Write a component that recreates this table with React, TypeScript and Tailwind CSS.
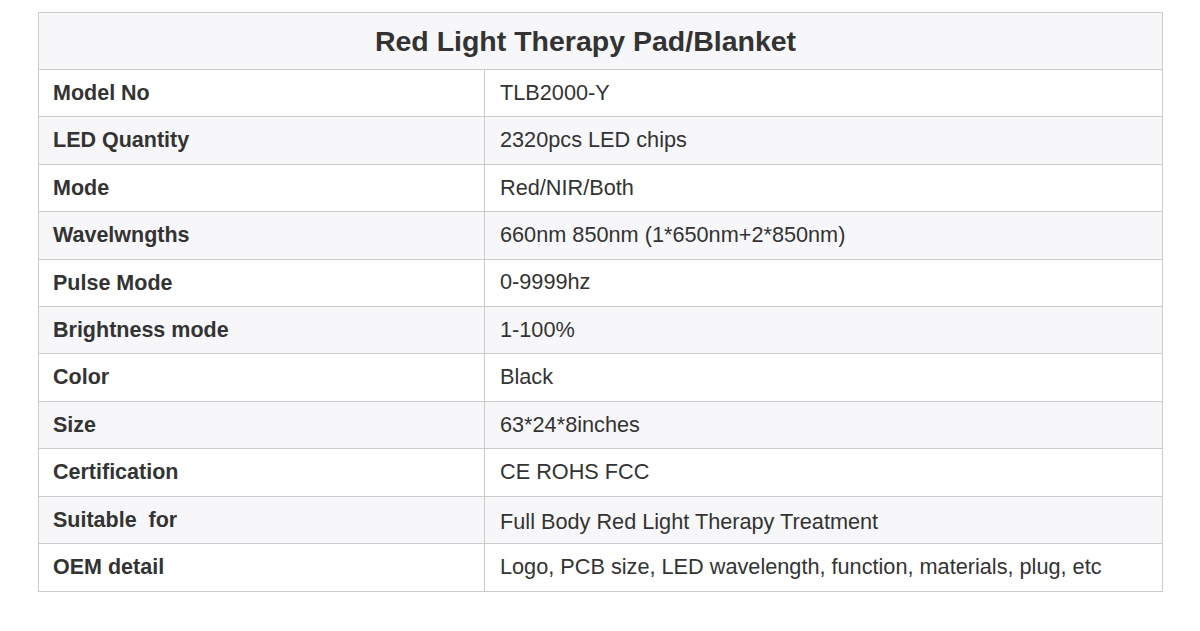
import React from "react";

const rows: [string, string, boolean][] = [
  ["Model No", "TLB2000-Y", false],
  ["LED Quantity", "2320pcs LED chips", false],
  ["Mode", "Red/NIR/Both", false],
  ["Wavelwngths", "660nm 850nm (1*650nm+2*850nm)", false],
  ["Pulse Mode", "0-9999hz", false],
  ["Brightness mode", "1-100%", false],
  ["Color", "Black", false],
  ["Size", "63*24*8inches", false],
  ["Certification", "CE ROHS FCC", false],
  ["Suitable  for", "Full Body Red Light Therapy Treatment", true],
  ["OEM detail", "Logo, PCB size, LED wavelength, function, materials, plug, etc", false],
];

export default function App() {
  return (
    <div
      className="w-[1200px] h-[631px] bg-white pt-[12px] pl-[38px]"
      style={{ fontFamily: '"Liberation Sans", Arial, sans-serif' }}
    >
      <div className="w-[1125px] border border-[#cccccc] text-[#333333]">
        <div className="h-[57px] bg-[#f7f7f9] border-b border-[#cccccc] flex items-center justify-center pr-[30px]">
          <span className="text-[28.5px] font-bold">Red Light Therapy Pad/Blanket</span>
        </div>
        {rows.map(([k, v, low], i) => (
          <div
            key={k}
            className={`flex h-[47.4px] ${i < rows.length - 1 ? "border-b border-[#cccccc]" : ""} ${
              i % 2 === 1 ? "bg-[#f7f7f9]" : "bg-white"
            }`}
          >
            <div className="w-[446px] border-r border-[#cccccc] flex items-center pl-[14px] text-[21.5px] font-bold whitespace-pre">
              {k}
            </div>
            <div className={`flex-1 flex items-center pl-[15px] text-[21.7px] ${low ? "pt-[5px]" : ""}`}>{v}</div>
          </div>
        ))}
      </div>
    </div>
  );
}
